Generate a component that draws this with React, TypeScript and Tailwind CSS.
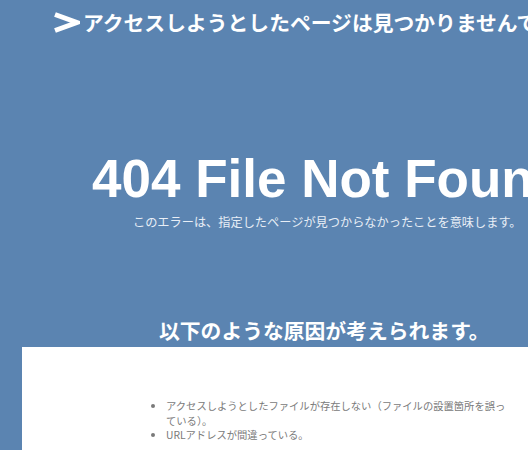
export default function App() {
  const causes = [
    'アクセスしようとしたファイルが存在しない（ファイルの設置箇所を誤っている）。',
    'URLアドレスが間違っている。',
  ];

  return (
    <div className="w-[528px] h-[450px] overflow-hidden bg-[#5b84b1] font-['Noto_Sans_CJK_JP',sans-serif]">
      {/* Header */}
      <header className="flex items-center h-[44px] pl-[53px] whitespace-nowrap">
        <svg width="27" height="21" viewBox="0 0 27 21" className="shrink-0">
          <path d="M 2 2.5 L 24 10.5 L 2 18.5" fill="none" stroke="#ffffff" strokeWidth="5" strokeLinejoin="miter" />
        </svg>
        <h1 className="ml-[3px] text-[20.8px] leading-[28px] font-bold text-white">
          アクセスしようとしたページは見つかりませんでした
        </h1>
      </header>

      {/* Error title */}
      <div className="pt-[108px] whitespace-nowrap">
        <p className="pl-[92px] font-['Liberation_Sans',Arial,sans-serif] text-[53px] leading-[53px] font-bold text-white">
          404 File Not Found
        </p>
        <p className="mt-[9px] pl-[133px] text-[12.2px] leading-[16px] text-[#e8eef6]">
          このエラーは、指定したページが見つからなかったことを意味します。
        </p>
        <h2 className="mt-[86px] pl-[159px] text-[20.8px] leading-[28px] font-bold text-white">
          以下のような原因が考えられます。
        </h2>
      </div>

      {/* Causes */}
      <div className="mt-[3px] ml-[22px] h-[200px] bg-white pt-[52px]">
        <ul className="ml-[144px] w-[342px] list-disc text-[10.3px] leading-[14.5px] text-[#7a7a7a]">
          {causes.map((c) => (
            <li key={c}>{c}</li>
          ))}
        </ul>
      </div>
    </div>
  );
}
